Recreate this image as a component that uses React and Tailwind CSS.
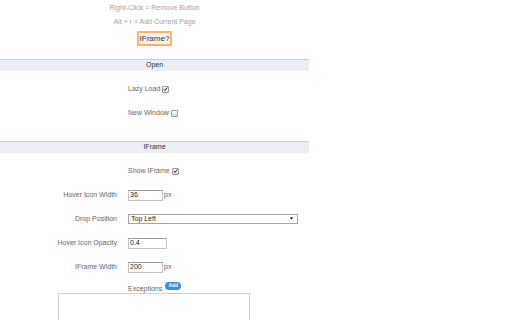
import React from 'react';

function Check({ checked }) {
  return (
    <span className="inline-flex items-center justify-center w-[7px] h-[7px] ml-[2px] border border-[#9a9a9a] rounded-[1px] bg-gradient-to-b from-white to-[#dcdcdc]">
      {checked && (
        <svg viewBox="0 0 8 8" className="w-[6px] h-[6px]">
          <path d="M1.2 4.2 L3.1 6.2 L6.8 1.6" fill="none" stroke="#111" strokeWidth="1.5" />
        </svg>
      )}
    </span>
  );
}

function Header({ title }) {
  return (
    <div className="h-[12px] border-t border-[#c9d2e3] bg-[#e9eef9] flex items-center justify-center text-[7px] text-[#333]">
      {title}
    </div>
  );
}

function Row({ label, children }) {
  return (
    <div className="h-[24px] flex items-center">
      <div className="w-[117px] text-right text-[#666] shrink-0">{label}</div>
      <div className="ml-[11px] flex items-center">{children}</div>
    </div>
  );
}

function TextInput({ value, width }) {
  return (
    <div
      className={`${width} h-[11px] border border-[#c4c4c4] border-t-[#9d9d9d] bg-white flex items-center pl-[1px] text-[7px] text-[#222]`}
    >
      {value}
    </div>
  );
}

export default function App() {
  return (
    <div className="w-[512px] h-[320px] bg-white overflow-hidden" style={{ fontFamily: '"Liberation Sans", Arial, sans-serif' }}>
      <div className="w-[309px] text-[7px] pt-[1px]">
        <div className="h-[14px] flex items-center justify-center text-[#a3a3a3]">Right-Click = Remove Button</div>
        <div className="h-[14px] flex items-center justify-center text-[#a3a3a3]">Alt + r = Add Current Page</div>
        <div className="flex justify-center mt-[2px] mb-[13px]">
          <button className="w-[35px] h-[15px] border-2 border-[#f7b46a] bg-[#f2f2f2] text-[8px] text-[#333] flex items-center justify-center rounded-[1px]">
            IFrame?
          </button>
        </div>

        <Header title="Open" />
        <div className="pt-[6px] pb-[16px]">
          <div className="h-[24px] flex items-center pl-[128px] text-[#666]">
            Lazy Load <Check checked />
          </div>
          <div className="h-[24px] flex items-center pl-[128px] text-[#666]">
            New Window <Check />
          </div>
        </div>

        <Header title="IFrame" />
        <div className="pt-[6px]">
          <div className="h-[24px] flex items-center pl-[128px] text-[#666]">
            Show IFrame <Check checked />
          </div>
          <Row label="Hover Icon Width">
            <TextInput value="36" width="w-[35px]" />
            <span className="ml-[1px] text-[#666]">px</span>
          </Row>
          <Row label="Drop Position">
            <div className="w-[170px] h-[10px] border border-[#a5a5a5] bg-white flex items-center justify-between pl-[2px] pr-[3px] text-[7px] text-[#222]">
              <span>Top Left</span>
              <span className="text-[5px]">▼</span>
            </div>
          </Row>
          <Row label="Hover Icon Opacity">
            <TextInput value="0.4" width="w-[39px]" />
          </Row>
          <Row label="IFrame Width">
            <TextInput value="200" width="w-[35px]" />
            <span className="ml-[1px] text-[#666]">px</span>
          </Row>
          <div className="h-[11px] mt-[3px] flex items-end pl-[128px] text-[#666]">
            <span className="leading-none mb-[1px]">Exceptions</span>
            <span className="ml-[3px] mb-[3px] w-[16px] h-[8px] rounded-[4px] bg-[#3a8ee6] text-white text-[5px] font-bold flex items-center justify-center">
              Add
            </span>
          </div>
          <div className="ml-[58px] w-[192px] h-[40px] border border-[#cfcfcf] bg-white" />
        </div>
      </div>
    </div>
  );
}
